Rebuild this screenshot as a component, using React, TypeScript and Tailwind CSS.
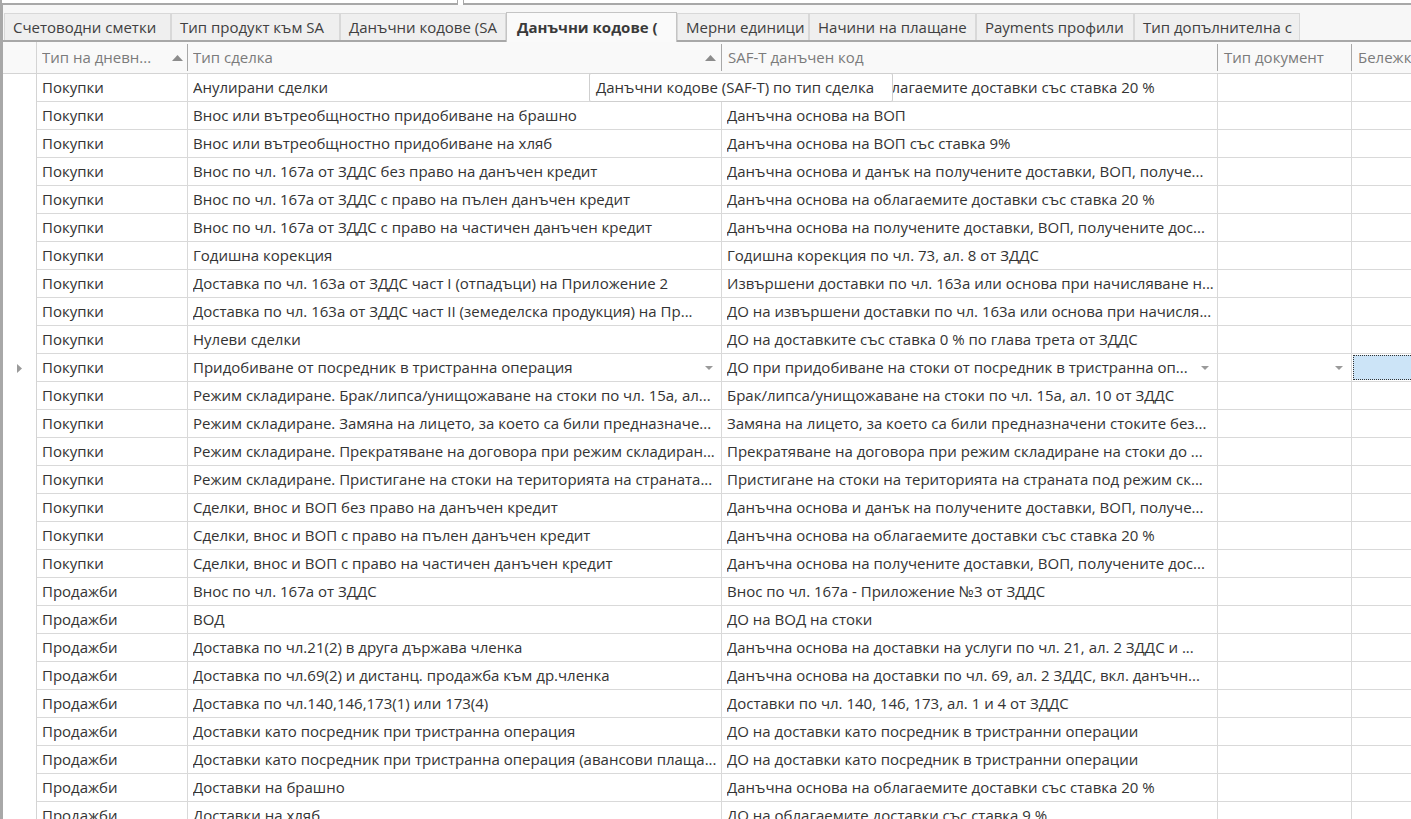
import React from "react";

type Row = {
  journal: string;
  deal: string;
  code: string;
};

const rows: Row[] = [
  { journal: "Покупки", deal: "Анулирани сделки", code: "Данъчна основа на облагаемите доставки със ставка 20 %" },
  { journal: "Покупки", deal: "Внос или вътреобщностно придобиване на брашно", code: "Данъчна основа на ВОП" },
  { journal: "Покупки", deal: "Внос или вътреобщностно придобиване на хляб", code: "Данъчна основа на ВОП със ставка 9%" },
  { journal: "Покупки", deal: "Внос по чл. 167а от ЗДДС без право на данъчен кредит", code: "Данъчна основа и данък на получените доставки, ВОП, получе..." },
  { journal: "Покупки", deal: "Внос по чл. 167а от ЗДДС с право на пълен данъчен кредит", code: "Данъчна основа на облагаемите доставки със ставка 20 %" },
  { journal: "Покупки", deal: "Внос по чл. 167а от ЗДДС с право на частичен данъчен кредит", code: "Данъчна основа на получените доставки, ВОП, получените дос..." },
  { journal: "Покупки", deal: "Годишна корекция", code: "Годишна корекция по чл. 73, ал. 8 от ЗДДС" },
  { journal: "Покупки", deal: "Доставка по чл. 163а от ЗДДС част I (отпадъци) на Приложение 2", code: "Извършени доставки по чл. 163а или основа при начисляване н..." },
  { journal: "Покупки", deal: "Доставка по чл. 163а от ЗДДС част II (земеделска продукция) на Пр...", code: "ДО на извършени доставки по чл. 163а или основа при начисля..." },
  { journal: "Покупки", deal: "Нулеви сделки", code: "ДО на доставките със ставка 0 % по глава трета от ЗДДС" },
  { journal: "Покупки", deal: "Придобиване от посредник в тристранна операция", code: "ДО при придобиване на стоки от посредник в тристранна оп..." },
  { journal: "Покупки", deal: "Режим складиране. Брак/липса/унищожаване на стоки по чл. 15а, ал...", code: "Брак/липса/унищожаване на стоки по чл. 15а, ал. 10 от ЗДДС" },
  { journal: "Покупки", deal: "Режим складиране. Замяна на лицето, за което са били предназначе...", code: "Замяна на лицето, за което са били предназначени стоките без..." },
  { journal: "Покупки", deal: "Режим складиране. Прекратяване на договора при режим складиран...", code: "Прекратяване на договора при режим складиране на стоки до ..." },
  { journal: "Покупки", deal: "Режим складиране. Пристигане на стоки на територията на страната...", code: "Пристигане на стоки на територията на страната под режим ск..." },
  { journal: "Покупки", deal: "Сделки, внос и ВОП без право на данъчен кредит", code: "Данъчна основа и данък на получените доставки, ВОП, получе..." },
  { journal: "Покупки", deal: "Сделки, внос и ВОП с право на пълен данъчен кредит", code: "Данъчна основа на облагаемите доставки със ставка 20 %" },
  { journal: "Покупки", deal: "Сделки, внос и ВОП с право на частичен данъчен кредит", code: "Данъчна основа на получените доставки, ВОП, получените дос..." },
  { journal: "Продажби", deal: "Внос по чл. 167а от ЗДДС", code: "Внос по чл. 167а - Приложение №3 от ЗДДС" },
  { journal: "Продажби", deal: "ВОД", code: "ДО на ВОД на стоки" },
  { journal: "Продажби", deal: "Доставка по чл.21(2) в друга държава членка", code: "Данъчна основа на доставки на услуги по чл. 21, ал. 2 ЗДДС и ..." },
  { journal: "Продажби", deal: "Доставка по чл.69(2) и дистанц. продажба към др.членка", code: "Данъчна основа на доставки по чл. 69, ал. 2 ЗДДС, вкл. данъчн..." },
  { journal: "Продажби", deal: "Доставка по чл.140,146,173(1) или 173(4)", code: "Доставки по чл. 140, 146, 173, ал. 1 и 4 от ЗДДС" },
  { journal: "Продажби", deal: "Доставки като посредник при тристранна операция", code: "ДО на доставки като посредник в тристранни операции" },
  { journal: "Продажби", deal: "Доставки като посредник при тристранна операция (авансови плаща...", code: "ДО на доставки като посредник в тристранни операции" },
  { journal: "Продажби", deal: "Доставки на брашно", code: "Данъчна основа на облагаемите доставки със ставка 20 %" },
  { journal: "Продажби", deal: "Доставки на хляб", code: "ДО на облагаемите доставки със ставка 9 %" },
];

const tabs = [
  { label: "Счетоводни сметки", w: "w-[167px]" },
  { label: "Тип продукт към SA", w: "w-[169px]" },
  { label: "Данъчни кодове (SA", w: "w-[166px]" },
  { label: "Данъчни кодове (", w: "w-[171px]", active: true },
  { label: "Мерни единици", w: "w-[132px]" },
  { label: "Начини на плащане", w: "w-[167px]" },
  { label: "Payments профили", w: "w-[158px]" },
  { label: "Тип допълнителна с", w: "w-[166px]" },
];

const SELECTED = 10;

function SortArrow() {
  return (
    <svg width="11" height="6" viewBox="0 0 11 6" className="shrink-0">
      <polygon points="0,6 5.5,0 11,6" fill="#8c8c8c" />
    </svg>
  );
}

function DropArrow() {
  return (
    <svg width="8" height="4" viewBox="0 0 8 4" className="shrink-0">
      <polygon points="0,0 8,0 4,4" fill="#9a9a9a" />
    </svg>
  );
}

function RowPointer() {
  return (
    <svg width="5" height="9" viewBox="0 0 5 9">
      <polygon points="0,0 5,4.5 0,9" fill="#9a9a9a" />
    </svg>
  );
}

export default function App() {
  return (
    <div
      className="relative w-[1411px] h-[819px] overflow-hidden bg-white text-[15px] text-[#333333]"
      style={{ fontFamily: '"Open Sans", "Noto Sans", sans-serif' }}
    >
      {/* filter boxes above the tab strip */}
      <div className="flex h-[5px] bg-white">
        <div className="w-[458px] border-b-2 border-r border-l-2 border-[#a8a8a8]" />
        <div className="w-[5px]" />
        <div className="flex-1 border-b-2 border-l border-[#a8a8a8]" />
      </div>

      {/* tab strip */}
      <div className="flex h-[37px] items-end bg-[#f7f7f7] border-l-[3px] border-[#a8a8a8] pl-[1px] border-b-2 border-b-[#a8a8a8]">
        {tabs.map((t) =>
          t.active ? (
            <div
              key={t.label}
              className={`${t.w} h-[30px] -mb-[2px] shrink-0 flex items-center pl-[10px] bg-[#fafafa] border border-b-0 border-[#c4c4c4] font-bold text-[#3a3a3a] whitespace-nowrap overflow-hidden`}
            >
              {t.label}
            </div>
          ) : (
            <div
              key={t.label}
              className={`${t.w} h-[27px] shrink-0 flex items-center pl-[8px] bg-[#efefef] border border-b-0 border-[#d8d8d8] text-[#404040] whitespace-nowrap overflow-hidden`}
            >
              {t.label}
            </div>
          )
        )}
      </div>

      {/* grid */}
      <div className="border-l-[3px] border-[#a8a8a8] h-full">
        {/* column headers */}
        <div className="flex h-[32px] bg-[#f9f9f9] border-b border-[#d4d4d4] text-[#7b7b7b]">
          <div className="w-[34px] shrink-0 border-r border-[#d4d4d4]" />
          <div className="w-[151px] shrink-0 flex items-center pl-[5px] pr-[5px] relative">
            <span className="flex-1 whitespace-nowrap overflow-hidden">Тип на дневн...</span>
            <SortArrow />
            <div className="absolute right-0 top-[2px] bottom-[2px] w-px bg-[#a8a8a8]" />
          </div>
          <div className="w-[534px] shrink-0 flex items-center pl-[5px] pr-[6px] relative">
            <span className="flex-1 whitespace-nowrap overflow-hidden">Тип сделка</span>
            <SortArrow />
            <div className="absolute right-0 top-[2px] bottom-[2px] w-px bg-[#a8a8a8]" />
          </div>
          <div className="w-[496px] shrink-0 flex items-center pl-[6px] relative">
            <span className="whitespace-nowrap">SAF-T данъчен код</span>
            <div className="absolute right-0 top-[2px] bottom-[2px] w-px bg-[#a8a8a8]" />
          </div>
          <div className="w-[134px] shrink-0 flex items-center pl-[6px] relative">
            <span className="whitespace-nowrap">Тип документ</span>
            <div className="absolute right-0 top-[2px] bottom-[2px] w-px bg-[#a8a8a8]" />
          </div>
          <div className="w-[150px] shrink-0 flex items-center pl-[6px]">
            <span className="whitespace-nowrap">Бележки</span>
          </div>
        </div>

        {/* data rows */}
        {rows.map((r, i) => {
          const sel = i === SELECTED;
          return (
            <div key={i} className="flex h-[28px]">
              <div className="w-[34px] shrink-0 border-r border-[#d4d4d4] flex items-center pl-[14px]">
                {sel && <RowPointer />}
              </div>
              <div className="w-[151px] shrink-0 border-r border-b border-[#d9d9d9] flex items-center pl-[5px] whitespace-nowrap overflow-hidden">
                {r.journal}
              </div>
              <div
                className={`w-[534px] shrink-0 border-r border-b border-[#d9d9d9] flex items-center pl-[5px] gap-2 ${sel ? "pr-[8px]" : "pr-[1px]"}`}
              >
                <span className="flex-1 whitespace-nowrap overflow-hidden">{r.deal}</span>
                {sel && <DropArrow />}
              </div>
              <div
                className={`w-[496px] shrink-0 border-r border-b border-[#d9d9d9] flex items-center pl-[5px] gap-2 ${sel ? "pr-[8px]" : "pr-[1px]"}`}
              >
                <span className="flex-1 whitespace-nowrap overflow-hidden">{r.code}</span>
                {sel && <DropArrow />}
              </div>
              <div className="w-[134px] shrink-0 border-r border-b border-[#d9d9d9] flex items-center justify-end pr-[8px]">
                {sel && <DropArrow />}
              </div>
              <div className="w-[150px] shrink-0 border-b border-[#d9d9d9] p-[1px]">
                {sel && <div className="h-full w-full bg-[#cce4f7] border border-dotted border-[#333333]" />}
              </div>
            </div>
          );
        })}
      </div>

      {/* hint shown over the grid */}
      <div className="absolute left-[589px] top-[73px] h-[29px] w-[304px] flex items-center pl-[6px] bg-white border border-[#cfcfcf] rounded-[2px] whitespace-nowrap text-[#333333]">
        Данъчни кодове (SAF-T) по тип сделка
      </div>
    </div>
  );
}
